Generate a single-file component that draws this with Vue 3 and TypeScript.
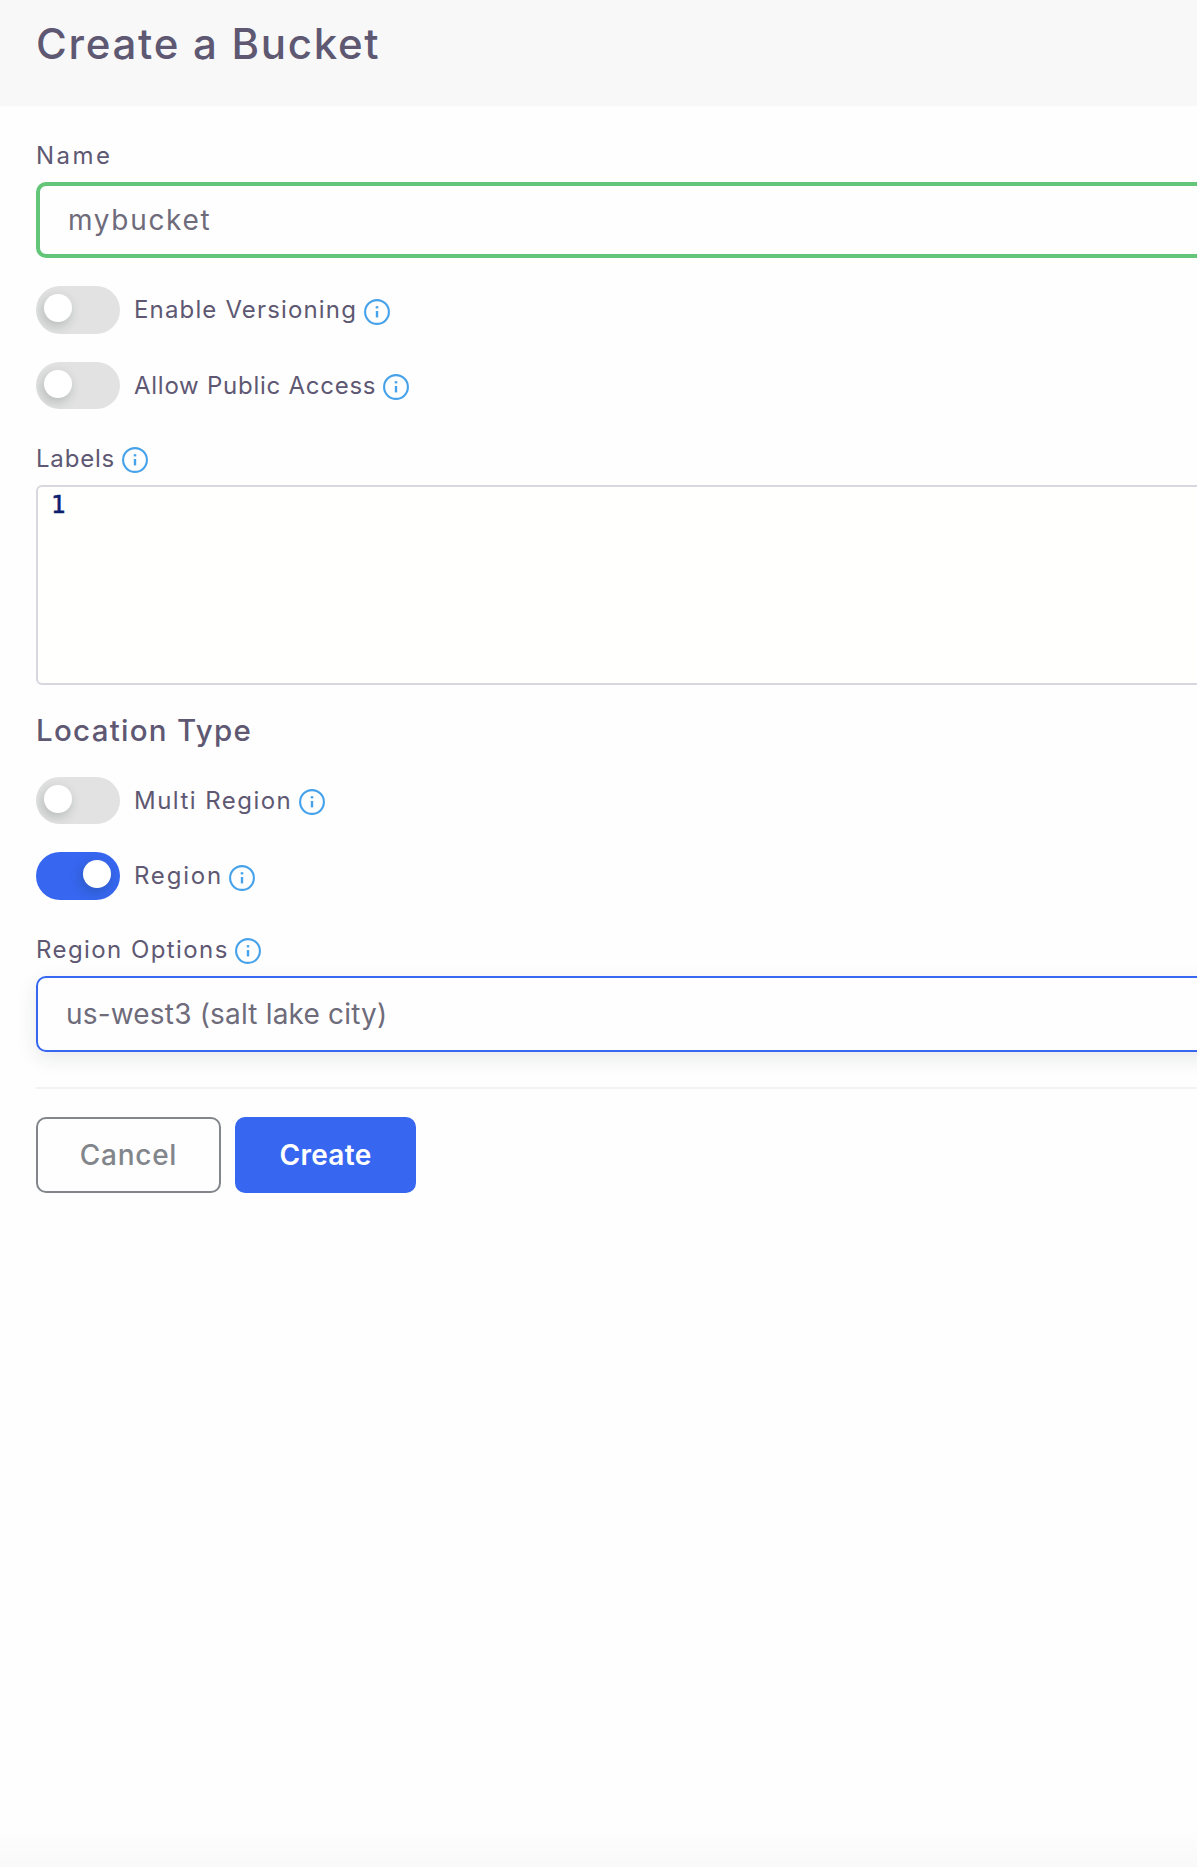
<script setup lang="ts">
import { defineComponent, h, ref } from 'vue'

interface Field {
  id: string
  text: string
  width: number
  spacing: number
}

interface Toggle extends Field {
  on: boolean
}

const InfoIcon = defineComponent({
  setup() {
    return () =>
      h('svg', { width: 26, height: 26, viewBox: '0 0 26 26', fill: 'none', stroke: '#45a2ea', 'stroke-width': 2.1, 'aria-hidden': 'true' }, [
        h('circle', { cx: 13, cy: 13, r: 11.9 }),
        h('path', { d: 'M13 12v6.4', 'stroke-width': 2.4 }),
        h('path', { d: 'M13 7.2v2.2', 'stroke-width': 2.6 }),
      ])
  },
})

const general = ref<Toggle[]>([
  { id: 'versioning', text: 'Enable Versioning', width: 230, spacing: 1.15, on: false },
  { id: 'public', text: 'Allow Public Access', width: 249, spacing: 0.74, on: false },
])

const locations = ref<Toggle[]>([
  { id: 'multi', text: 'Multi Region', width: 165, spacing: 1.46, on: false },
  { id: 'region', text: 'Region', width: 95, spacing: 1.78, on: true },
])

const labels: Field = { id: 'labels', text: 'Labels', width: 86, spacing: 0.8 }
const options: Field = { id: 'options', text: 'Region Options', width: 199, spacing: 1.42 }

const metrics = (f: Field) => ({ width: `${f.width}px`, letterSpacing: `${f.spacing}px` })
</script>

<template>
  <div class="page">
    <header class="header">
      <h1>Create a Bucket</h1>
    </header>
    <main class="form">
      <div class="label"><span class="name">Name</span></div>
      <div class="input valid">mybucket</div>

      <div class="toggles general">
        <div v-for="t in general" :key="t.id" class="row" :class="t.id" @click="t.on = !t.on">
          <span class="switch" :class="{ on: t.on }"><span class="knob"></span></span>
          <span class="text" :style="metrics(t)">{{ t.text }}</span>
          <InfoIcon class="info" />
        </div>
      </div>

      <div class="label">
        <span class="text" :style="metrics(labels)">{{ labels.text }}</span>
        <InfoIcon class="info" />
      </div>
      <div class="editor"><span class="line">1</span></div>

      <h2>Location Type</h2>
      <div class="toggles">
        <div v-for="t in locations" :key="t.id" class="row" :class="t.id" @click="t.on = !t.on">
          <span class="switch" :class="{ on: t.on }"><span class="knob"></span></span>
          <span class="text" :style="metrics(t)">{{ t.text }}</span>
          <InfoIcon class="info" />
        </div>
      </div>

      <div class="label">
        <span class="text" :style="metrics(options)">{{ options.text }}</span>
        <InfoIcon class="info" />
      </div>
      <div class="input focused">us-west3 (salt lake city)</div>

      <div class="divider"></div>
      <div class="actions">
        <button type="button" class="cancel">Cancel</button>
        <button type="button" class="create">Create</button>
      </div>
    </main>
    <div class="fade"></div>
  </div>
</template>

<style>
body {
  margin: 0;
  background: #fefefe;
}
</style>

<style scoped>
.page {
  display: flex;
  flex-direction: column;
  width: 100%;
  height: 1867px;
  overflow: hidden;
  background: #fefefe;
  color: #5e5873;
  font-family: Inter, "Liberation Sans", sans-serif;
}
.page * {
  box-sizing: border-box;
}
.header {
  flex: none;
  height: 106px;
  padding: 19px 36px 0;
  background: #f8f8f8;
}
h1,
h2 {
  margin: 0;
  font-weight: 500;
  white-space: nowrap;
}
h1 {
  font-size: 42px;
  line-height: 50px;
  letter-spacing: 1.72px;
}
h2 {
  margin-top: 25px;
  font-size: 29.5px;
  line-height: 40px;
  letter-spacing: 1.28px;
}
.form {
  flex: 1;
  padding: 0 0 0 36px;
}
.label {
  display: flex;
  align-items: center;
  height: 36px;
  margin: 31px 0 9px;
  font-size: 24px;
  line-height: 36px;
}
.label span {
  margin-top: 2px;
}
.name {
  letter-spacing: 2.5px;
}
.text {
  flex: none;
  white-space: nowrap;
}
.info {
  flex: none;
  margin-top: 4px;
}
.input {
  display: flex;
  align-items: center;
  height: 76px;
  margin-right: -40px;
  border-radius: 10px;
  color: #6e6b7b;
  background: #fefefe;
  font-size: 28px;
}
.valid {
  padding-left: 28px;
  border: 4px solid #62c578;
  letter-spacing: 1.68px;
}
.focused {
  padding-left: 28px;
  border: 2px solid #3767f0;
  box-shadow: 0 6px 20px rgba(34, 41, 47, 0.1);
  letter-spacing: 0.18px;
}
.toggles {
  display: flex;
  flex-direction: column;
  gap: 28px;
  margin-top: 27px;
}
.general {
  margin-top: 28px;
}
.row {
  display: flex;
  align-items: center;
  height: 47px;
  font-size: 24px;
  line-height: 36px;
}
.versioning,
.region {
  height: 48px;
}
.public .info,
.multi .info {
  margin-top: 3px;
}
.switch {
  flex: none;
  width: 84px;
  height: 100%;
  margin-right: 14px;
  padding: 8px;
  border-radius: 24px;
  background: #e2e2e2;
  overflow: hidden;
}
.knob {
  display: block;
  width: 28px;
  height: 28px;
  border-radius: 50%;
  background: #fff;
  box-shadow: -2px 4px 12px rgba(11, 43, 32, 0.22);
}
.on {
  background: #3767f0;
}
.on .knob {
  margin-left: 39px;
}
.editor {
  height: 200px;
  margin-right: -40px;
  padding-left: 13px;
  border: 2px solid #d8d6de;
  border-radius: 6px;
  background: #fffffd;
}
.line {
  display: block;
  color: #0b216f;
  font: 24px/36px "DejaVu Sans Mono", monospace;
  -webkit-text-stroke: 0.6px #0b216f;
}
.divider {
  height: 2px;
  margin-top: 35px;
  background: #f3f3f3;
}
.actions {
  display: flex;
  gap: 14px;
  margin-top: 28px;
}
button {
  height: 76px;
  padding: 0;
  border: 0;
  border-radius: 10px;
  font: 500 28px Inter, "Liberation Sans", sans-serif;
}
.cancel {
  width: 185px;
  border: 2px solid #82868b;
  background: transparent;
  color: #82868b;
  letter-spacing: 0.72px;
}
.create {
  width: 181px;
  background: #3767f0;
  color: #fff;
  font-weight: 600;
  letter-spacing: 0.3px;
}
.fade {
  flex: none;
  height: 40px;
  background: linear-gradient(#fefefe, #f9f9f9);
}
</style>
